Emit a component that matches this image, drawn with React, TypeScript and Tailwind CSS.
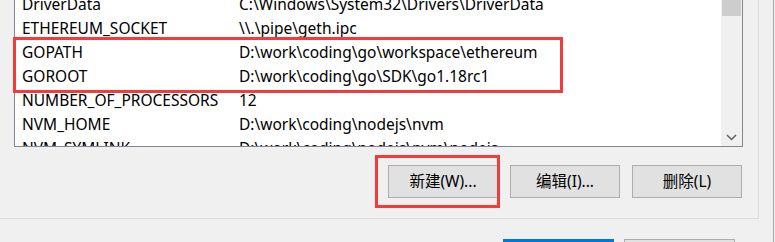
const rows: [string, string][] = [
  ["DriverData", "C:\\Windows\\System32\\Drivers\\DriverData"],
  ["ETHEREUM_SOCKET", "\\\\.\\pipe\\geth.ipc"],
  ["GOPATH", "D:\\work\\coding\\go\\workspace\\ethereum"],
  ["GOROOT", "D:\\work\\coding\\go\\SDK\\go1.18rc1"],
  ["NUMBER_OF_PROCESSORS", "12"],
  ["NVM_HOME", "D:\\work\\coding\\nodejs\\nvm"],
  ["NVM_SYMLINK", "D:\\work\\coding\\nodejs\\nvm\\nodejs"],
];

function WinButton({ label }: { label: string }) {
  return (
    <button className="flex h-[33px] w-[110px] items-center justify-center border border-[#adadad] bg-[#e1e1e1] text-[15.5px] text-black">
      {label}
    </button>
  );
}

export default function App() {
  return (
    <div
      className="relative flex h-[242px] w-[775px] overflow-hidden bg-[#f0f0f0] text-black"
      style={{ fontFamily: '"Noto Sans", "Noto Sans CJK SC", sans-serif' }}
    >
      <div className="flex w-[774px] flex-col border-r border-[#a9a9a9]">
        {/* group box */}
        <div className="flex h-[219px] w-[759px] shrink-0 flex-col border-r border-b border-[#dcdcdc] pl-[14px] pr-[16px]">
          <div className="flex h-[147px] w-[729px] shrink-0 border-x border-b border-[#828790] bg-white">
            <div className="flex-1 overflow-hidden">
              <div className="-mt-[7px]">
                {rows.map(([name, value]) => (
                  <div key={name} className="flex h-[24px] items-center text-[15.5px] leading-none">
                    <span className="w-[224px] pl-[7px]">{name}</span>
                    <span>{value}</span>
                  </div>
                ))}
              </div>
            </div>
            <div className="flex w-[21px] flex-col justify-between bg-[#f0f0f0]">
              <div className="mx-[1px] h-[16px] bg-[#cdcdcd]" />
              <div className="mb-[5px] flex justify-center">
                <svg width="11" height="7" viewBox="0 0 11 7" fill="none">
                  <path d="M1 1l4.5 4.5L10 1" stroke="#606060" strokeWidth="1.5" />
                </svg>
              </div>
            </div>
          </div>
          <div className="mt-[18px] flex shrink-0 justify-end gap-[12px]">
            <WinButton label="新建(W)..." />
            <WinButton label="编辑(I)..." />
            <WinButton label="删除(L)" />
          </div>
        </div>
        <div className="mt-[20px] flex shrink-0 gap-[10px] pl-[503px]">
          <div className="h-[33px] w-[111px] shrink-0 border border-[#0078d7] bg-[#0078d7]" />
          <div className="h-[33px] w-[111px] shrink-0 border border-[#adadad] bg-[#e1e1e1]" />
        </div>
      </div>

      {/* annotation boxes */}
      <div className="absolute left-[13px] top-[37px] h-[56px] w-[550px] border-[3px] border-[#f23c3c]" />
      <div className="absolute left-[375px] top-[155px] h-[53px] w-[125px] border-[3px] border-[#f23c3c]" />
    </div>
  );
}
